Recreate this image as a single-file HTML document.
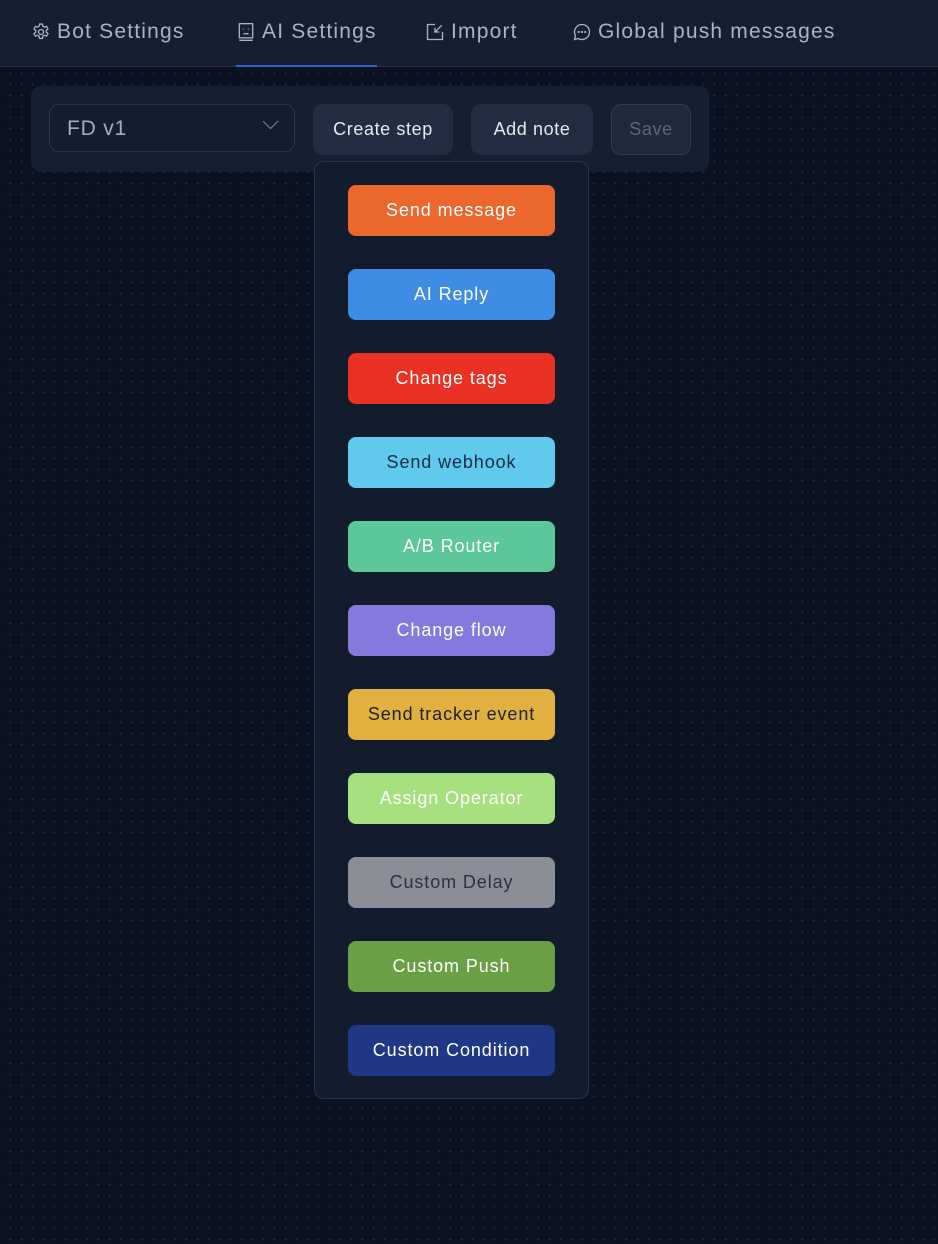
<!DOCTYPE html>
<html><head><meta charset="utf-8"><style>
*{margin:0;padding:0;box-sizing:border-box}
body{width:938px;height:1244px;overflow:hidden;font-family:"Liberation Sans",sans-serif;background:#0a1222;background-image:radial-gradient(circle,#222c42 0.8px,transparent 1px);background-size:11px 11px;background-position:5px 2px;position:relative}
.hdr{position:absolute;left:0;top:0;width:938px;height:67px;background:#161f32;border-bottom:1px solid #283349}
.tab{position:absolute;top:18px;font-size:21px;letter-spacing:1.2px;color:#a9b3c4;display:flex;align-items:center;gap:6px;height:28px}
.tab svg{width:20px;height:20px}
.ul{position:absolute;left:236px;top:65px;width:141px;height:2px;background:#2e63c9}
.bar{position:absolute;left:31px;top:86px;width:678px;height:86px;background:#161f31;border-radius:10px}
.sel{position:absolute;left:49px;top:104px;width:246px;height:48px;border:1px solid #2a3447;border-radius:10px;background:#141d2e;color:#a3adbd;font-size:21px;letter-spacing:0.8px;padding:12px 17px}
.sel span{position:absolute;right:18px;width:11px;height:11px;border-right:1.5px solid #7c8798;border-bottom:1.5px solid #7c8798;transform:rotate(45deg);top:11px}
.btn{position:absolute;top:104px;height:51px;border-radius:10px;background:#222d41;color:#e6eaf0;font-size:18px;letter-spacing:0.6px;display:flex;align-items:center;justify-content:center}
.menu{position:absolute;left:314px;top:161px;width:275px;height:938px;background:#131c2d;border:1px solid #2a3447;border-radius:10px}
.it{position:absolute;left:348px;width:207px;height:51px;border-radius:8px;display:flex;align-items:center;justify-content:center;font-size:18px;letter-spacing:0.9px;color:#fff}
</style></head><body>
<div class="hdr">
<div class="tab" style="left:31px"><svg viewBox="0 0 24 24" fill="none" stroke="#a9b3c4" stroke-width="1.6"><circle cx="12" cy="12" r="3"/><path d="M10.3 2.5h3.4l.5 2.6 2 1.1 2.5-.9 1.7 2.9-2 1.8v2.2l2 1.8-1.7 2.9-2.5-.9-2 1.1-.5 2.6h-3.4l-.5-2.6-2-1.1-2.5.9-1.7-2.9 2-1.8v-2.2l-2-1.8 1.7-2.9 2.5.9 2-1.1z"/></svg>Bot Settings</div>
<div class="tab" style="left:236px"><svg viewBox="0 0 24 24" fill="none" stroke="#a9b3c4" stroke-width="1.6"><rect x="4" y="2" width="16" height="17"/><path d="M4 22h16M9 8v1M15 8v1M9 14h6"/></svg>AI Settings</div>
<div class="tab" style="left:425px"><svg viewBox="0 0 24 24" fill="none" stroke="#a9b3c4" stroke-width="1.6"><path d="M12 3H3v18h18v-9M20 4l-8 8M12 7v5h5"/></svg>Import</div>
<div class="tab" style="left:572px"><svg viewBox="0 0 24 24" fill="none" stroke="#a9b3c4" stroke-width="1.6"><path d="M12 3a9 9 0 1 1-4.5 16.8L3 21l1.2-4.5A9 9 0 0 1 12 3z"/><circle cx="8" cy="12" r=".6"/><circle cx="12" cy="12" r=".6"/><circle cx="16" cy="12" r=".6"/></svg>Global push messages</div>
<div class="ul"></div>
</div>
<div class="bar"></div>
<div class="sel">FD v1<span></span></div>
<div class="btn" style="left:313px;width:140px">Create step</div>
<div class="btn" style="left:471px;width:122px">Add note</div>
<div class="btn" style="left:611px;width:80px;background:#1f293b;border:1px solid #3b3a3a;color:#5d6778">Save</div>
<div class="menu"></div>
<div class="it" style="top:185px;background:#ec672c">Send message</div>
<div class="it" style="top:269px;background:#3e8ce3">AI Reply</div>
<div class="it" style="top:353px;background:#ea3224">Change tags</div>
<div class="it" style="top:437px;background:#5fc9ee;color:#1b2b44">Send webhook</div>
<div class="it" style="top:521px;background:#5cc89a">A/B Router</div>
<div class="it" style="top:605px;background:#8679de">Change flow</div>
<div class="it" style="top:689px;background:#e2b03e;color:#1b2233">Send tracker event</div>
<div class="it" style="top:773px;background:#a7e07e">Assign Operator</div>
<div class="it" style="top:857px;background:#8b8e96;color:#283246">Custom Delay</div>
<div class="it" style="top:941px;background:#6a9f46">Custom Push</div>
<div class="it" style="top:1025px;background:#1f3784">Custom Condition</div>
</body></html>
